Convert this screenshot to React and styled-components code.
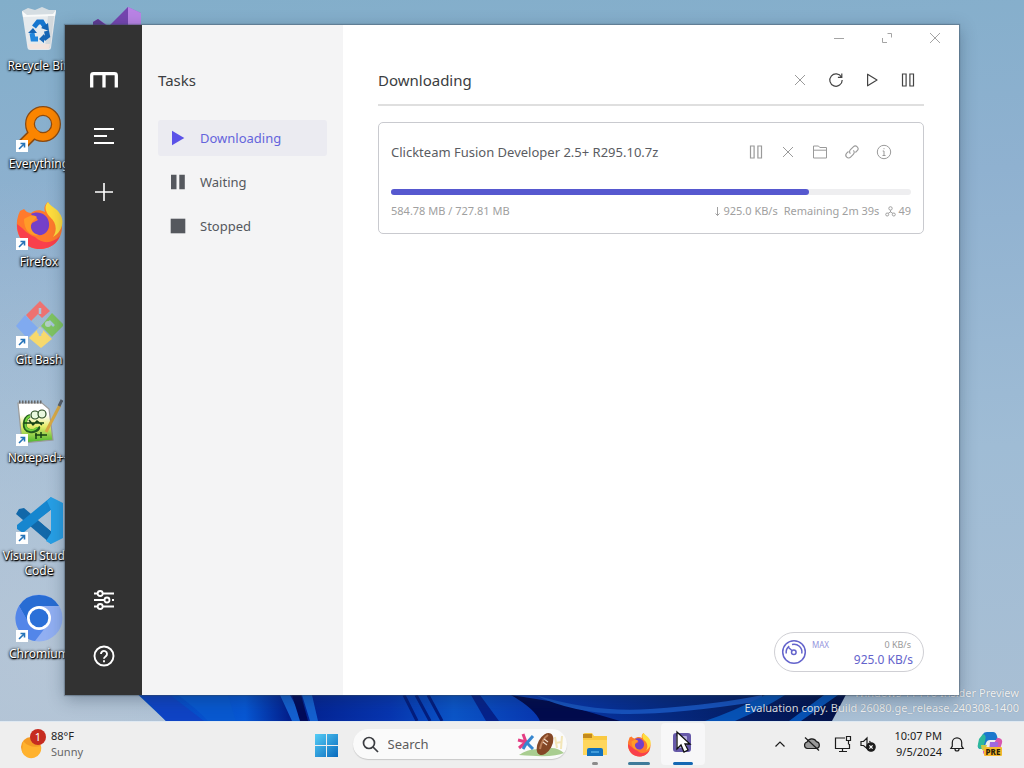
import React from 'react';
import styled, { createGlobalStyle, css } from 'styled-components';

const GlobalStyle = createGlobalStyle`
  *, *::before, *::after { box-sizing: border-box; }
  body { margin: 0; font-family: "Noto Sans", "Open Sans", sans-serif; color: #3b3d41; }
  button, input { font: inherit; color: inherit; }
  h1, h2, h3, p, ul { margin: 0; padding: 0; font-weight: 400; }
  ul { list-style: none; }
  svg { display: block; flex: none; }
`;

const Screen = styled.div`
  height: 100vh;
  min-height: 480px;
  display: flex;
  flex-direction: column;
  overflow: hidden;
`;

const Desktop = styled.main`
  position: relative;
  flex: 1;
  min-height: 0;
  overflow: hidden;
  background:
    radial-gradient(circle at 4% 90%, rgba(188, 201, 216, 0.7), transparent 40%),
    linear-gradient(176deg, #82aeca 0%, #8fb1d0 30%, #9fbcd5 65%, #a9bfd4 100%);
`;

const Wallpaper = styled.svg`
  position: absolute;
  inset: auto 0 0 0;
  width: 100%;
  height: 34px;
`;

const IconGrid = styled.ul`
  position: relative;
  display: grid;
  grid-template-columns: 78px 78px;
  grid-auto-rows: 98px;
  grid-auto-flow: row;
`;

const DesktopItem = styled.li`
  grid-column: ${(p) => p.$column || 1};
`;

const Shortcut = styled.button`
  width: 100%;
  padding: 6px 0 0;
  border: 0;
  background: none;
  display: flex;
  flex-direction: column;
  align-items: center;
  gap: 4px;
  color: #fff;
  font-size: 12px;
  line-height: 15px;
  text-shadow: 0 1px 2px #000, 0 0 3px #000, 1px 1px 1px #000;
`;

const Watermark = styled.p`
  position: absolute;
  right: 5px;
  bottom: 6px;
  color: rgba(255, 255, 255, 0.88);
  font-size: 11px;
  line-height: 15px;
  text-align: right;
  text-shadow: 0 0 1px rgba(0, 0, 0, 0.3);
`;

const AppWindow = styled.section`
  position: absolute;
  inset: 25px 65px 26px;
  display: grid;
  grid-template-columns: 77px 201px 1fr;
  background: #fff;
  box-shadow: 0 0 1px 1px rgba(60, 75, 90, 0.4), 0 4px 16px rgba(20, 40, 60, 0.35);
`;

const Rail = styled.nav`
  display: flex;
  flex-direction: column;
  align-items: center;
  padding: 27px 0 11px;
  background: #323232;
  color: #fff;
`;

const RailButton = styled.button`
  width: 56px;
  height: 56px;
  padding: 0;
  border: 0;
  display: grid;
  place-items: center;
  background: none;
  margin-top: ${(p) => (p.$pushed ? 'auto' : 0)};
`;

const TaskPanel = styled.aside`
  padding: 43px 16px 0;
  background: #f4f4f5;
`;

const PanelTitle = styled.h2`
  font-size: 15px;
  line-height: 24px;
  margin-bottom: 28px;
`;

const TaskList = styled.ul`
  display: grid;
  gap: 8px;
`;

const TaskLink = styled.a`
  display: flex;
  align-items: center;
  gap: 14px;
  height: 36px;
  padding: 0 12px;
  border-radius: 3px;
  font-size: 13px;
  text-decoration: none;
  color: ${(p) => (p.$active ? '#6464dc' : '#55585e')};
  background: ${(p) => (p.$active ? '#ebebf1' : 'transparent')};
`;

const Content = styled.div`
  display: flex;
  flex-direction: column;
  min-width: 0;
`;

const TitleBar = styled.div`
  display: flex;
  justify-content: flex-end;
`;

const WindowButton = styled.button`
  width: 48px;
  height: 26px;
  padding: 0;
  border: 0;
  display: grid;
  place-items: center;
  background: none;
  color: #a4a4a4;
`;

const PageBody = styled.div`
  flex: 1;
  display: flex;
  flex-direction: column;
  padding: 4px 35px 23px;
`;

const PageHeader = styled.header`
  display: flex;
  align-items: center;
  justify-content: space-between;
  height: 51px;
  border-bottom: 2px solid #dfdfdf;
`;

const PageTitle = styled.h1`
  font-size: 15px;
  line-height: 24px;
`;

const Actions = styled.div`
  display: flex;
  gap: ${(p) => p.$gap || 0}px;
  margin-right: ${(p) => p.$inset || 0}px;
`;

const IconButton = styled.button`
  width: 32px;
  height: 32px;
  padding: 0;
  border: 0;
  display: grid;
  place-items: center;
  background: none;
  color: ${(p) => (p.$muted ? '#9a9a9a' : '#444')};
`;

const TaskCard = styled.article`
  margin-top: 16px;
  padding: 13px 12px 14px;
  border: 1px solid #c9cacf;
  border-radius: 5px;
`;

const CardTop = styled.div`
  display: flex;
  align-items: center;
  justify-content: space-between;
`;

const CardTitle = styled.h3`
  font-size: 13px;
  line-height: 20px;
  color: #5a5c62;
`;

const Track = styled.div`
  height: 6px;
  margin: 21px 0 8px;
  border-radius: 3px;
  background: #eeeef0;
`;

const Fill = styled.div`
  height: 100%;
  border-radius: 3px;
  background: #5658cf;
`;

const Meta = styled.div`
  display: flex;
  justify-content: space-between;
  color: #a0a0a0;
  font-size: 11px;
  line-height: 16px;
`;

const MetaGroup = styled.div`
  display: flex;
  align-items: center;
  gap: 6px;
`;

const MetaItem = styled.span`
  display: inline-flex;
  align-items: center;
  gap: 2px;
`;

const Speedometer = styled.button`
  align-self: flex-end;
  margin-top: auto;
  width: 150px;
  height: 40px;
  padding: 0 10px 0 6px;
  display: flex;
  align-items: center;
  gap: 5px;
  border: 1px solid #cfcfd4;
  border-radius: 20px;
  background: #fff;
  color: #6464cc;
`;

const SpeedRows = styled.span`
  flex: 1;
  display: grid;
`;

const SpeedRow = styled.span`
  display: flex;
  justify-content: space-between;
  padding-right: 2px;
  font-size: 9px;
  line-height: 15px;
  color: #999;
`;

const MaxLabel = styled.span`
  font-size: 8px;
  color: #9494dd;
`;

const SpeedValue = styled.span`
  font-size: 12px;
  line-height: 15px;
  text-align: right;
`;

const Taskbar = styled.footer`
  height: 47px;
  flex: none;
  display: grid;
  grid-template-columns: 1fr auto 1fr;
  align-items: center;
  padding: 0 16px 1px 0;
  box-shadow: inset 0 1px #dfe9f2;
  background: #eeeeee;
  font-size: 11px;
  line-height: 16px;
`;

const plainButton = css`
  border: 0;
  padding: 0;
  background: none;
`;

const Weather = styled.button`
  ${plainButton}
  display: flex;
  align-items: center;
  gap: 5px;
  padding-left: 20px;
  text-align: left;
`;

const Lines = styled.span`
  display: grid;
  color: #222;
`;

const Soft = styled.span`
  color: #666;
`;

const Pinned = styled.div`
  display: flex;
  align-items: center;
`;

const PinnedButton = styled.button`
  ${plainButton}
  width: 44px;
  height: 42px;
  display: flex;
  flex-direction: column;
  align-items: center;
  justify-content: flex-end;
  gap: 5px;
  border-radius: 4px;
  background: ${(p) => (p.$active ? '#f7f7f8' : 'transparent')};
`;

const Indicator = styled.span`
  width: ${(p) => p.$width}px;
  height: 3px;
  border-radius: 2px;
  background: ${(p) => p.$color};
`;

const SearchBox = styled.label`
  width: 214px;
  height: 30px;
  margin: 0 6px 0 5px;
  padding: 0 2px 0 9px;
  display: flex;
  align-items: center;
  gap: 9px;
  border-radius: 15px;
  background: #fafafa;
  box-shadow: 0 1px 1px rgba(0, 0, 0, 0.16);
`;

const SearchInput = styled.input`
  flex: 1;
  min-width: 0;
  padding: 0;
  border: 0;
  outline: 0;
  background: none;
  font-size: 13px;
  line-height: 20px;
  &::placeholder { color: #5c5c5c; opacity: 1; }
`;

const Tray = styled.div`
  display: flex;
  align-items: center;
  justify-content: flex-end;
  color: #1c1c1c;
`;

const TrayButton = styled.button`
  ${plainButton}
  width: ${(p) => p.$width}px;
  height: 40px;
  display: grid;
  place-items: center;
`;

const Clock = styled.button`
  ${plainButton}
  display: grid;
  padding-left: 16px;
  text-align: right;
`;

function Svg({ size = 16, w, h, box, children, ...rest }) {
  const width = w || size;
  const height = h || size;
  return (
    <svg width={width} height={height} viewBox={box || `0 0 ${width} ${height}`} fill="none"
      stroke="currentColor" strokeWidth="1.2" aria-hidden="true" {...rest}>
      {children}
    </svg>
  );
}

const CloseIcon = ({ size = 12 }) => (
  <Svg size={size} box="0 0 12 12" strokeWidth="1"><path d="M1 1l10 10M11 1L1 11" /></Svg>
);
const PauseIcon = () => (
  <Svg size={14}><path d="M1.5 1h3.6v12H1.5zM8.9 1h3.6v12H8.9z" /></Svg>
);
const PlayIcon = () => (
  <Svg size={14}><path d="M2.6 1.2v11.6L12 7z" strokeLinejoin="round" /></Svg>
);
const RefreshIcon = () => (
  <Svg size={16}><path d="M13.4 5A6.2 6.2 0 1 0 14.2 8M13.8 1.4v3.9H9.9" /></Svg>
);
const FolderIcon = () => (
  <Svg size={16} strokeWidth="1"><path d="M1.5 14V2h5l1.3 1.5h6.7V14zM1.5 6.2h13" /></Svg>
);
const LinkIcon = () => (
  <Svg size={16} strokeWidth="1.1">
    <path d="M6.4 9.7a3 3 0 0 1 .1-4l2.8-2.9a2.7 2.7 0 0 1 3.9 3.9L11.4 8.500M9.4 6.300a3 3 0 0 1-.1 4l-2.700 2.800a2.700 2.700 0 0 1-3.900-3.900L4.500 7.500" />
  </Svg>
);
const InfoIcon = () => (
  <Svg size={16} strokeWidth="1"><circle cx="8" cy="8" r="6.700" /><path d="M8 7v4.500M6.700 7H8M6.500 11.500h3M7.500 4.700h1" /></Svg>
);
const PeersIcon = () => (
  <Svg size={11} strokeWidth="1">
    <circle cx="5.500" cy="2.400" r="1.700" /><circle cx="2.200" cy="8.500" r="1.500" /><circle cx="8.800" cy="8.500" r="1.500" />
    <path d="M5.500 4.200v1.800L3.200 7.300M5.500 6l2.300 1.300" />
  </Svg>
);
const DownArrow = () => (
  <Svg w={7} h={11} strokeWidth="1"><path d="M3.500 1v8.500M1.500 7.500l2 2 2-2" /></Svg>
);
const GaugeIcon = () => (
  <Svg size={26} strokeWidth="1.500">
    <circle cx="13" cy="13" r="11.300" />
    <path d="M5.200 14.500a8 8 0 0 1 3-7.300M11 5.400a8 8 0 0 1 9.800 9.100M7.500 8.500l3.700 3.300" />
    <circle cx="12.800" cy="13.200" r="2.300" />
  </Svg>
);
const FilledPlay = () => (
  <Svg size={16} fill="#5b52e8" stroke="none"><path d="M2 .8v14.400L14.300 8z" /></Svg>
);
const FilledPause = () => (
  <Svg size={16} fill="currentColor" stroke="none"><path d="M1 .8h5.500v14.400H1zM9.300.8h5.500v14.400H9.300z" /></Svg>
);
const FilledStop = () => (
  <Svg size={16} fill="currentColor" stroke="none"><rect x=".7" y=".7" width="14.600" height="14.600" /></Svg>
);
const LogoMark = () => (
  <Svg w={28} h={16} strokeWidth="3.300"><path d="M1.700 15.500V3.500q0-1.800 1.800-1.800h21q1.800 0 1.800 1.800v12M14 2v13.500" /></Svg>
);
const MenuIcon = () => (
  <Svg size={22} strokeWidth="2"><path d="M1 4h20M1 11h13M1 18h20" /></Svg>
);
const PlusIcon = () => (
  <Svg size={22} strokeWidth="1.600"><path d="M11 2v18M2 11h18" /></Svg>
);
const SlidersIcon = () => (
  <Svg size={22} strokeWidth="1.800">
    <path d="M1 4.500h3.500M10 4.500h11M1 11h10M19 11h2M1 17.500h3.500M10 17.500h11" />
    <circle cx="7.200" cy="4.500" r="2.500" /><circle cx="14" cy="11" r="2.500" /><circle cx="7.200" cy="17.500" r="2.500" />
  </Svg>
);
const HelpIcon = () => (
  <Svg size={22} strokeWidth="1.900">
    <circle cx="11" cy="11" r="9.500" /><path d="M8 9a3 3 0 1 1 4.700 2.400c-1.200.8-1.700 1.100-1.700 2.400M11 15.300v1.900" />
  </Svg>
);

const ArrowBadge = () => (
  <g>
    <rect x="1" y="36" width="12" height="12" fill="#fff" />
    <path d="M4 45l5-5M5.500 39.500H9.500V43.500" stroke="#2573b8" strokeWidth="1.600" />
  </g>
);

const RecycleArt = () => (
  <Svg size={48} stroke="none">
    <path d="M7 5l34-1-5 38q-.5 2-2.500 2H15q-2 0-2.500-2z" fill="#e6eaed" />
    <path d="M7 5l34-1-1 6-32 1z" fill="#f9fafa" />
    <path d="M7 5l6-3 7 2 7-3 7 3 7 0-3 4-26 1z" fill="#d5dde2" />
    <path d="M33 10h6l-4 32h-5z" fill="#d4dade" />
    <path d="M13 38h22l-1 5H15z" fill="#f3e5df" />
    <path d="M19 21l4-5h4l3 5" stroke="#1676cf" strokeWidth="5" />
    <path d="M31.500 25l1 5-4 3" stroke="#1465b5" strokeWidth="5" />
    <path d="M23 33h-5l-1-6" stroke="#2186dc" strokeWidth="5" />
    <path d="M26 22l7-5 1 8zM29 28v9l-5-4zM13 27l5-5 4 5z" fill="#1465b5" />
  </Svg>
);
const EverythingArt = () => (
  <Svg size={48} stroke="none">
    <path d="M22 26L5 43" stroke="#8b4a10" strokeWidth="11" />
    <circle cx="28" cy="20" r="13" stroke="#8b4a10" strokeWidth="10" />
    <path d="M22 26L5 43" stroke="#fb8500" strokeWidth="8" />
    <circle cx="28" cy="20" r="13" stroke="#fb8500" strokeWidth="7.500" />
    <ArrowBadge />
  </Svg>
);
const FirefoxShapes = () => (
  <g>
    <path d="M5 9q-4 8-3 18c2 13 12 20 23 20 12 0 22-9 22-22 0-8-4-13-9-17L33 0c-4 3-4 7-3 10-5-3-11-2-14 1-4 0-6-3-7-4-1 1-3 1-4 2z" fill="#ff7a2c" />
    <path d="M2 22c0 15 10 25 23 25 9 0 17-5 20-13-8 8-18 8-25 1-7-2-11-8-18-13z" fill="#f9404c" />
    <path d="M33 0c-4 4-3 10 2 15 7 6 7 14 3 20 9-5 12-16 7-23C42 6 36 5 33 0z" fill="#ffdd3d" />
    <path d="M16 12c7-4 17 0 18 9 1 8-5 13-11 12-7-1-9-7-6-12l6-3c-2-4-5-3-7-6z" fill="#7540c8" />
    <path d="M9 17c6-3 8-5 13-2l-5 5c-3 5 0 12 7 13-8 2-15-4-15-16z" fill="#ff9b28" />
  </g>
);
const FirefoxArt = () => <Svg size={48} stroke="none"><FirefoxShapes /><ArrowBadge /></Svg>;
const GitArt = () => (
  <Svg size={48} stroke="none">
    <path d="M25 1l10 10-8 7-4-4-7 7-5-6z" fill="#ed7271" />
    <path d="M10 15l13 13-11 10L1 26z" fill="#80aaf0" />
    <path d="M37 13l12 12-12 12-11-11z" fill="#7fc462" />
    <path d="M25 27l12 12-11 9-12-10z" fill="#f7d96d" />
    <path d="M25 8v6M34 21l5 5M25 29v7" stroke="#a9c5db" strokeWidth="2.500" />
    <circle cx="25" cy="31" r="3" fill="#a9c5db" /><circle cx="33" cy="24" r="3" fill="#b2cfc6" />
    <ArrowBadge />
  </Svg>
);
const NotepadArt = () => (
  <Svg size={48} stroke="none">
    <defs>
      <linearGradient id="page" x1="0" y1="0" x2="0" y2="1">
        <stop offset=".3" stopColor="#fff" /><stop offset=".58" stopColor="#e7ed6b" /><stop offset="1" stopColor="#46b52b" />
      </linearGradient>
    </defs>
    <path d="M3 5h24l7 6 4 31-31 3z" fill="url(#page)" stroke="#9b9b9b" />
    <path d="M4 4h24" stroke="#666" strokeWidth="3" strokeDasharray="1.500 1.500" />
    <path d="M15 18c-6 1-8 14 0 15 5 1 9-2 8-4" stroke="#235c1f" strokeWidth="4" />
    <path d="M15 18c-5 2-7 13 0 14 4 1 7-2 7-3" stroke="#73d13c" strokeWidth="2" />
    <circle cx="20" cy="17" r="4" fill="#e9f8df" stroke="#274921" /><circle cx="27" cy="16" r="4" fill="#e9f8df" stroke="#274921" />
    <path d="M9 25h20M14 22l4 5 4-4 5 4M20 37h12M21 35v6M26 34v6" stroke="#164114" strokeWidth="1.500" />
    <path d="M31 34L45 7" stroke="#d8a944" strokeWidth="3" /><path d="M44 8l3-6" stroke="#59616c" strokeWidth="3" />
    <ArrowBadge />
  </Svg>
);
const CodeArt = () => (
  <Svg size={48} stroke="none">
    <path d="M4 13l5-1 27 23v13L1 18z" fill="#1268a9" />
    <path d="M36 1v13L8 37l-6-4v-4z" fill="#1686cf" />
    <path d="M36 1l12 6v35l-12 6-5-3 5-8V14l-4-9z" fill="#279fe5" />
    <path d="M36 14v21L23 24z" fill="#adc2d5" />
    <ArrowBadge />
  </Svg>
);
const ChromiumArt = () => (
  <Svg size={48} stroke="none">
    <circle cx="24" cy="24" r="23.500" fill="#91aff2" />
    <path d="M24 1A23 23 0 0 0 4 12l10 18 10-18h20A23 23 0 0 0 24 1z" fill="#286cd3" />
    <path d="M4 12A23 23 0 0 0 20 47l10-13-16-5z" fill="#5386e9" />
    <circle cx="24" cy="24" r="12" fill="#fff" /><circle cx="24" cy="24" r="9.300" fill="#2b70d8" />
    <ArrowBadge />
  </Svg>
);
const StudioArt = () => (
  <Svg size={48} stroke="none">
    <path d="M0 16l5-3 12 8 18-20 13 6v38H0z" fill="#9a63ce" />
    <path d="M35 1v44h13V7z" fill="#b983e5" /><path d="M0 16l5-3 8 6v20H0z" fill="#5e3b92" />
    <path d="M16 20L35 1v19z" fill="#7545af" />
  </Svg>
);

const WindowsArt = () => (
  <Svg size={24} stroke="none">
    <defs><linearGradient id="tiles" x1="0" y1="0" x2="1" y2="1"><stop stopColor="#55cdf6" /><stop offset="1" stopColor="#0869bd" /></linearGradient></defs>
    <path d="M1 1h11v11H1zM13 1h11v11H13zM1 13h11v11H1zM13 13h11v11H13z" fill="url(#tiles)" />
  </Svg>
);
const HighlightArt = () => (
  <Svg w={50} h={28} stroke="none">
    <path d="M4 25q11-8 25-5 10-5 20 3-10 5-45 2z" fill="#a9cd90" />
    <path d="M40 7l2 11M47 6l-1 13M40 13l7-1" stroke="#f3e6b8" strokeWidth="2" />
    <path d="M8 4l3 8-8-2M11 12l-7 6" stroke="#e33d83" strokeWidth="3" />
    <path d="M18 6l-7 8-3 5M11 12l7 7" stroke="#3686cf" strokeWidth="3" />
    <ellipse cx="30" cy="14" rx="7" ry="12" transform="rotate(28 30 14)" fill="#844726" />
    <path d="M33 5q-6 4-8 14" stroke="#bc7f58" strokeWidth="2" /><path d="M29 9l4 3M28 12l4 3" stroke="#f1dcca" />
  </Svg>
);
const ExplorerArt = () => (
  <Svg w={26} h={24} stroke="none">
    <path d="M1 2q0-2 2-2h7l2 3h13v19H1z" fill="#f9c941" /><path d="M1 1h9v4H1z" fill="#c38a1d" />
    <path d="M1 7h24v15H1z" fill="#ffd65b" /><path d="M5 17q0-2 2-2h12q2 0 2 2v6H5z" fill="#1271bd" /><path d="M9 19h8" stroke="#3f9bda" strokeWidth="2" />
  </Svg>
);
const MotrixArt = () => (
  <Svg size={28} stroke="none">
    <rect x="4" y="4" width="18" height="19" rx="3" fill="#6659a9" /><rect x="7" y="7" width="11" height="12" rx="1" fill="#b9b2df" />
    <path d="M8 3v17l4-4 3 7 4-2-3-6h5z" fill="#fff" stroke="#111" strokeWidth="1.300" />
  </Svg>
);
const WeatherArt = () => (
  <Svg w={26} h={30} stroke="none">
    <circle cx="11" cy="18" r="10" fill="#f39a25" /><path d="M3 12q7 8 18 5a10 10 0 0 1-19 6z" fill="#ffb22e" />
    <circle cx="18" cy="8" r="8" fill="#c62b20" />
    <text x="18" y="12" textAnchor="middle" fontSize="11" fill="#fff">1</text>
  </Svg>
);
const CopilotArt = () => (
  <Svg size={26} stroke="none">
    <path d="M6 3q1-2 4-2h6q3 0 4 4l1 4h-8q-3 0-4 3l-2 6H4q-4 0-3-4z" fill="#1b78cc" />
    <path d="M2 8l4-5q4 1 2 7l-2 8H3q-3-1-2-5z" fill="#2cb89c" />
    <path d="M20 7h2q4 1 3 5l-3 9q-1 3-4 3H9q-3 0-3-4l7-1q2-1 3-5z" fill="#d756b0" />
    <path d="M13 11h7q2 0 1 3l-2 6h-7z" fill="#9f68df" />
    <path d="M4 14h6l-2 6q-4 0-4-6z" fill="#c9c94a" />
    <rect x="7" y="16" width="18" height="9" rx="1" fill="#f6b82e" />
    <text x="16" y="24" textAnchor="middle" fontSize="8" fontWeight="800" fill="#2b2108">PRE</text>
  </Svg>
);

const shortcuts = [
  ['Recycle Bin', RecycleArt], ['Everything', EverythingArt], ['Firefox', FirefoxArt], ['Git Bash', GitArt],
  ['Notepad++', NotepadArt], ['Visual Studio Code', CodeArt], ['Chromium', ChromiumArt],
];

const taskFilters = [
  ['Downloading', FilledPlay], ['Waiting', FilledPause], ['Stopped', FilledStop],
];

export default function App() {
  const done = 584.78;
  const total = 727.81;
  return (
    <Screen>
      <GlobalStyle />
      <Desktop>
        <Wallpaper viewBox="0 0 1024 34" preserveAspectRatio="none" aria-hidden="true">
          <defs>
            <linearGradient id="bloom">
              <stop stopColor="#0646c2" /><stop offset=".16" stopColor="#0757d3" /><stop offset=".22" stopColor="#03208d" />
              <stop offset=".36" stopColor="#0735af" /><stop offset=".45" stopColor="#0b55c7" /><stop offset=".57" stopColor="#0837b0" />
              <stop offset=".75" stopColor="#06297f" /><stop offset="1" stopColor="#031146" />
            </linearGradient>
          </defs>
          <path d="M130 0H850L832 34H166z" fill="url(#bloom)" />
          <path d="M142 8l24 26h38L170 8z" fill="#0f43c4" /><path d="M178 8q20 15 30 26h28L228 8z" fill="#0858cf" />
          <path d="M280 8l12 26h12L290 8zM302 8l8 26h8L312 8z" fill="#1460cf" /><path d="M292 8l8 26h8L301 8z" fill="#020b59" />
          <path d="M404 8l13 26M416 8l14 26M428 8l14 26" stroke="#031d7e" strokeWidth="3" />
          <path d="M471 8l15 26h13L480 8z" fill="#06228a" /><path d="M511 8q24 14 29 26h80L555 15z" fill="#020b4d" />
          <path d="M535 8q60 18 115 14 70-5 112-14v6q-90 14-140 13-50-1-87-19z" fill="#1752bb" />
          <path d="M690 8L650 34M765 8q-30 16-60 26h30q30-13 50-26zM824 8l-35 26h12L838 8z" fill="#0752b5" />
        </Wallpaper>
        <Watermark>Windows 11 Pro Insider Preview<br />Evaluation copy. Build 26080.ge_release.240308-1400</Watermark>
        <IconGrid>
          {shortcuts.map(([name, Art], i) => (
            <React.Fragment key={name}>
              <DesktopItem><Shortcut><Art />{name}</Shortcut></DesktopItem>
              {i === 0 && <DesktopItem $column={2}><Shortcut aria-label="Visual Studio"><StudioArt /></Shortcut></DesktopItem>}
            </React.Fragment>
          ))}
        </IconGrid>

        <AppWindow aria-label="Motrix">
          <Rail>
            <RailButton aria-label="Motrix"><LogoMark /></RailButton>
            <RailButton aria-label="Task list"><MenuIcon /></RailButton>
            <RailButton aria-label="Add task"><PlusIcon /></RailButton>
            <RailButton aria-label="Preferences" $pushed><SlidersIcon /></RailButton>
            <RailButton aria-label="Help"><HelpIcon /></RailButton>
          </Rail>
          <TaskPanel>
            <PanelTitle>Tasks</PanelTitle>
            <TaskList>
              {taskFilters.map(([name, Icon], i) => (
                <li key={name}><TaskLink href={`#${name.toLowerCase()}`} $active={i === 0}><Icon />{name}</TaskLink></li>
              ))}
            </TaskList>
          </TaskPanel>
          <Content>
            <TitleBar>
              <WindowButton aria-label="Minimize"><Svg size={12} strokeWidth="1"><path d="M1 6.500h10" /></Svg></WindowButton>
              <WindowButton aria-label="Maximize"><Svg size={12} strokeWidth="1"><path d="M6.500 1.500h4v4M1.500 6v4.500H6" /></Svg></WindowButton>
              <WindowButton aria-label="Close"><CloseIcon /></WindowButton>
            </TitleBar>
            <PageBody>
              <PageHeader>
                <PageTitle>Downloading</PageTitle>
                <Actions $gap={4}>
                  <IconButton $muted aria-label="Delete selected"><CloseIcon /></IconButton>
                  <IconButton aria-label="Refresh"><RefreshIcon /></IconButton>
                  <IconButton aria-label="Resume all"><PlayIcon /></IconButton>
                  <IconButton aria-label="Pause all"><PauseIcon /></IconButton>
                </Actions>
              </PageHeader>
              <TaskCard>
                <CardTop>
                  <CardTitle>Clickteam Fusion Developer 2.5+ R295.10.7z</CardTitle>
                  <Actions $inset={11}>
                    <IconButton $muted aria-label="Pause"><PauseIcon /></IconButton>
                    <IconButton $muted aria-label="Delete"><CloseIcon /></IconButton>
                    <IconButton $muted aria-label="Open folder"><FolderIcon /></IconButton>
                    <IconButton $muted aria-label="Copy link"><LinkIcon /></IconButton>
                    <IconButton $muted aria-label="Details"><InfoIcon /></IconButton>
                  </Actions>
                </CardTop>
                <Track role="progressbar" aria-label="Download progress" aria-valuemin={0} aria-valuemax={total} aria-valuenow={done}>
                  <Fill style={{ width: `${(done / total) * 100}%` }} />
                </Track>
                <Meta>
                  <span>584.78 MB / 727.81 MB</span>
                  <MetaGroup>
                    <MetaItem><DownArrow />925.0 KB/s</MetaItem>
                    <MetaItem>Remaining 2m 39s</MetaItem>
                    <MetaItem><PeersIcon />49</MetaItem>
                  </MetaGroup>
                </Meta>
              </TaskCard>
              <Speedometer>
                <GaugeIcon />
                <SpeedRows>
                  <SpeedRow><MaxLabel>MAX</MaxLabel>0 KB/s</SpeedRow>
                  <SpeedValue>925.0 KB/s</SpeedValue>
                </SpeedRows>
              </Speedometer>
            </PageBody>
          </Content>
        </AppWindow>
      </Desktop>

      <Taskbar>
        <Weather><WeatherArt /><Lines><span>88°F</span><Soft>Sunny</Soft></Lines></Weather>
        <Pinned>
          <PinnedButton aria-label="Start"><WindowsArt /><Indicator $width={6} $color="transparent" /></PinnedButton>
          <SearchBox>
            <Svg size={17} strokeWidth="1.700"><circle cx="7" cy="7" r="5.500" /><path d="M11 11l5 5" /></Svg>
            <SearchInput type="search" placeholder="Search" aria-label="Search" />
            <HighlightArt />
          </SearchBox>
          <PinnedButton aria-label="File Explorer"><ExplorerArt /><Indicator $width={6} $color="#8b8b8b" /></PinnedButton>
          <PinnedButton aria-label="Firefox"><Svg size={24} box="0 0 48 48" stroke="none"><FirefoxShapes /></Svg><Indicator $width={22} $color="#3e7b9a" /></PinnedButton>
          <PinnedButton aria-label="Motrix" $active><MotrixArt /><Indicator $width={20} $color="#1468b3" /></PinnedButton>
        </Pinned>
        <Tray>
          <TrayButton $width={32} aria-label="Show hidden icons"><Svg size={12}><path d="M1.500 8.500L6 4l4.500 4.500" /></Svg></TrayButton>
          <TrayButton $width={32} aria-label="OneDrive">
            <Svg w={18} h={16}><path d="M4.500 12.500a3.300 3.300 0 0 1-.4-6.500 5.200 5.200 0 0 1 9.400-.3 3.500 3.500 0 0 1 .3 6.800z" fill="#999" /><path d="M2 1.500l14 13" /></Svg>
          </TrayButton>
          <TrayButton $width={30} aria-label="Network">
            <Svg size={18}><path d="M11 3H1.500v10.500h14V9M8.500 13.500v3M5 16.500h8M12.500 1.500h4v4h-4zM14.500 5.500v4" /></Svg>
          </TrayButton>
          <TrayButton $width={20} aria-label="Volume">
            <Svg size={16}><path d="M1 5.500v4h2.500L7 12.500V2L3.500 5.500zM9.500 5l1 1.500" /><circle cx="11" cy="11" r="4.200" fill="#1c1c1c" /><path d="M9.400 9.400l3.200 3.200M12.600 9.400l-3.200 3.200" stroke="#fff" /></Svg>
          </TrayButton>
          <Clock><span>10:07 PM</span><span>9/5/2024</span></Clock>
          <TrayButton $width={30} aria-label="Notifications">
            <Svg size={16}><path d="M1.800 12.500l1.500-2.300V6.500a4.700 4.700 0 0 1 9.400 0v3.700l1.500 2.300zM6 13a2 2 0 0 0 4 0" /></Svg>
          </TrayButton>
          <TrayButton $width={36} aria-label="Copilot"><CopilotArt /></TrayButton>
        </Tray>
      </Taskbar>
    </Screen>
  );
}
